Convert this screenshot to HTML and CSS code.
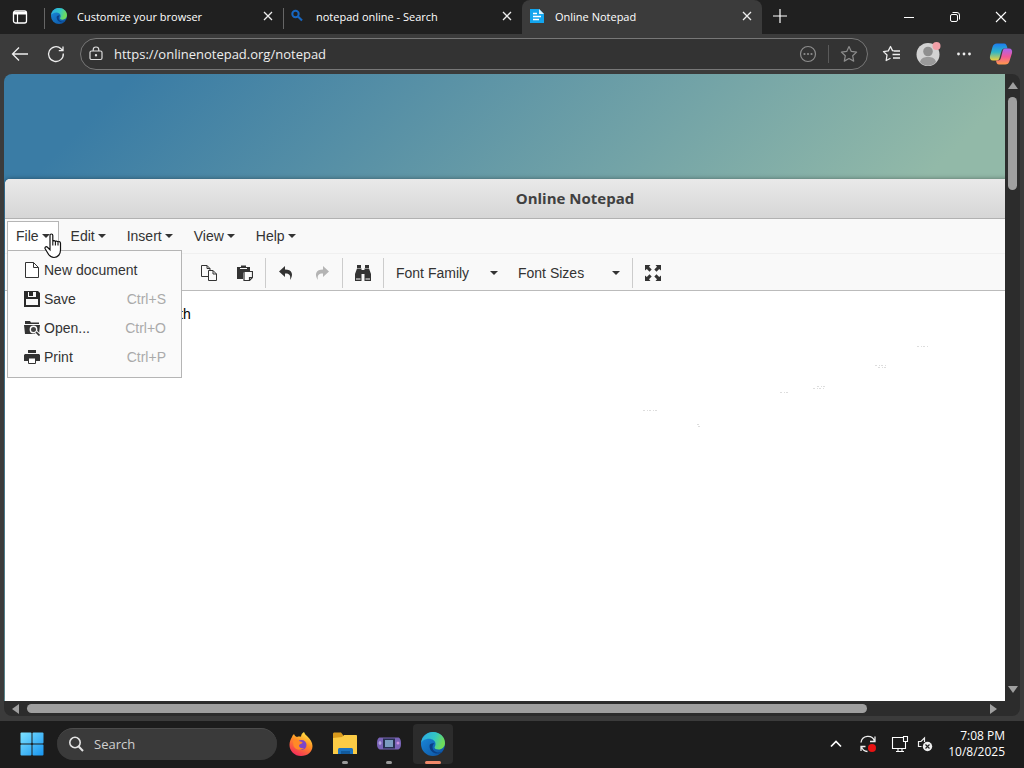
FILE: index.html
```html
<!DOCTYPE html>
<html lang="en">
<head>
    <meta charset="UTF-8">
    <meta name="viewport" content="width=device-width, initial-scale=1.0">
    <title>Online Notepad</title>
    <link rel="stylesheet" href="styles.css">
</head>
<body>
    <svg width="0" height="0" class="defs" aria-hidden="true">
        <defs>
            <linearGradient id="edge-a" x1="0" y1="0" x2="1" y2="0.3">
                <stop offset="0" stop-color="#2aa7e8"/>
                <stop offset="0.6" stop-color="#33c6c4"/>
                <stop offset="1" stop-color="#6fdc5a"/>
            </linearGradient>
            <linearGradient id="edge-b" x1="0" y1="0" x2="1" y2="1">
                <stop offset="0" stop-color="#1b8ee0"/>
                <stop offset="1" stop-color="#0c4f9e"/>
            </linearGradient>
            <linearGradient id="win" gradientUnits="userSpaceOnUse" x1="0" y1="0" x2="24" y2="24">
                <stop offset="0" stop-color="#7fe3ff"/>
                <stop offset="1" stop-color="#1593f0"/>
            </linearGradient>
            <linearGradient id="fox" x1="0.8" y1="0" x2="0.3" y2="1">
                <stop offset="0" stop-color="#fff04a"/>
                <stop offset="0.45" stop-color="#ff9124"/>
                <stop offset="1" stop-color="#f4285c"/>
            </linearGradient>
            <linearGradient id="cop-a" x1="0" y1="0" x2="0" y2="1">
                <stop offset="0" stop-color="#1b7df0"/>
                <stop offset="0.5" stop-color="#2fb5c8"/>
                <stop offset="1" stop-color="#f5d13a"/>
            </linearGradient>
            <linearGradient id="cop-b" x1="0" y1="0" x2="0" y2="1">
                <stop offset="0" stop-color="#a865f0"/>
                <stop offset="0.5" stop-color="#f0589a"/>
                <stop offset="1" stop-color="#ff9a4a"/>
            </linearGradient>
            <symbol id="edge" viewBox="0 0 24 24">
                <circle cx="12" cy="12" r="12" fill="url(#edge-b)"/>
                <path d="M0 11C1 4 6 0 12 0c7 0 12 5 12 11 0 4-3 6.500-6.500 6.500-2.500 0-4-1-4-2 0-.8 1-1.500 1-3.500C14.500 9 11.500 6.800 8 6.800 4 6.800 1 9 0 11z" fill="url(#edge-a)"/>
                <path d="M8.500 14c0 5 4.500 8 9 7.500 2-.2 3.500-1 4.500-2-1 .5-2.500 1-4.500 1-3.500 0-6-2.500-6-5.500 0-2 1-3 2-3.500-3-.5-5 .5-5 2.500z" fill="#0a3f86"/>
            </symbol>
            <symbol id="close" viewBox="0 0 16 16">
                <path d="M4 4l8 8M12 4l-8 8" stroke="#eee" stroke-width="1.300" fill="none"/>
            </symbol>
        </defs>
    </svg>

    <header class="tabstrip">
        <button class="tab-menu" aria-label="Tab actions">
            <svg width="16" height="16" viewBox="0 0 16 16"><rect x="1.500" y="2" width="13" height="12" rx="2" fill="none" stroke="#fff" stroke-width="1.300"/><path d="M1.500 3h13v2.500h-13z" fill="#fff"/><path d="M5.500 5v9" stroke="#fff" stroke-width="1.200"/></svg>
        </button>
        <div class="tab">
            <svg class="favicon" width="16" height="16"><use href="#edge"/></svg>
            <span class="tab-title">Customize your browser</span>
            <button class="tab-close" aria-label="Close tab"><svg width="16" height="16"><use href="#close"/></svg></button>
        </div>
        <div class="tab">
            <svg class="favicon" width="16" height="16" viewBox="0 0 16 16"><circle cx="5.500" cy="6" r="3.200" fill="none" stroke="#1767c2" stroke-width="2"/><path d="M8 8.500l4 4" stroke="#1767c2" stroke-width="2.200"/></svg>
            <span class="tab-title">notepad online - Search</span>
            <button class="tab-close" aria-label="Close tab"><svg width="16" height="16"><use href="#close"/></svg></button>
        </div>
        <div class="tab active">
            <svg class="favicon" width="16" height="16" viewBox="0 0 16 16"><path d="M0 1h9l5 5v9H0z" fill="#12a5ee"/><path d="M9 1l5 5H9z" fill="#d8f1fd"/><path d="M3 5.500h4M3 8.500h8M3 11.500h6" stroke="#fff" stroke-width="1.400"/></svg>
            <span class="tab-title">Online Notepad</span>
            <button class="tab-close" aria-label="Close tab"><svg width="16" height="16"><use href="#close"/></svg></button>
        </div>
        <button class="new-tab" aria-label="New tab">
            <svg width="16" height="16" viewBox="0 0 16 16"><path d="M8 1v14M1 8h14" stroke="#fff" stroke-width="1.200"/></svg>
        </button>
        <div class="window-controls">
            <button aria-label="Minimize"><svg width="12" height="12" viewBox="0 0 12 12"><path d="M1 6.500h10" stroke="#fff"/></svg></button>
            <button aria-label="Restore"><svg width="12" height="12" viewBox="0 0 12 12" fill="none" stroke="#fff"><rect x="1.500" y="3.500" width="7" height="7" rx="1.500"/><path d="M3.500 1.500h4.500a2.500 2.500 0 0 1 2.500 2.500v4.500"/></svg></button>
            <button aria-label="Close"><svg width="12" height="12" viewBox="0 0 12 12"><path d="M1 1l10 10M11 1L1 11" stroke="#fff" stroke-width="1.100"/></svg></button>
        </div>
    </header>

    <nav class="navbar">
        <button class="nav-btn" aria-label="Back"><svg width="20" height="20" viewBox="0 0 20 20" fill="none" stroke="#eee" stroke-width="1.300"><path d="M18 10H2.500M9 3.500L2.500 10 9 16.500"/></svg></button>
        <button class="nav-btn" aria-label="Refresh"><svg width="20" height="20" viewBox="0 0 20 20" fill="none" stroke="#eee" stroke-width="1.300"><path d="M17.300 9.500A7.400 7.400 0 1 1 15 4.700L17 6.500M17 2.500v4.200h-4.200"/></svg></button>
        <div class="address">
            <svg width="16" height="16" viewBox="0 0 16 16" fill="none" stroke="#ddd" stroke-width="1.200"><rect x="2" y="5" width="12" height="8.500" rx="1.500"/><path d="M5.200 5V3.800a2.800 2.800 0 0 1 5.600 0V5"/><circle cx="8" cy="9.300" r=".6" fill="#ddd"/></svg>
            <input type="text" value="https://onlinenotepad.org/notepad" aria-label="Address">
            <button class="address-btn" aria-label="More"><svg width="18" height="18" viewBox="0 0 18 18"><circle cx="9" cy="9" r="7.500" fill="none" stroke="#8d8d8d" stroke-width="1.200"/><g fill="#8d8d8d"><circle cx="5.500" cy="9" r="1.100"/><circle cx="9" cy="9" r="1.100"/><circle cx="12.500" cy="9" r="1.100"/></g></svg></button>
            <span class="address-sep"></span>
            <button class="address-btn" aria-label="Favorite"><svg width="18" height="18" viewBox="0 0 18 18" fill="none" stroke="#8d8d8d" stroke-width="1.200" stroke-linejoin="round"><path d="M9 1.500l2.300 4.900 5.300.7-3.900 3.700 1 5.300L9 13.500l-4.700 2.600 1-5.300L1.400 7.100l5.300-.7z"/></svg></button>
        </div>
        <button class="nav-btn" aria-label="Favorites"><svg width="20" height="20" viewBox="0 0 20 20" fill="none" stroke="#eee" stroke-width="1.300" stroke-linejoin="round"><path d="M12 6.800L10.500 6.600 8.500 2.500 6.300 6.900l-4.800.7L5 11l-.8 5.500 4.300-2.300"/><path d="M12 7h6M10.500 10.500h7.500M11 14h7"/></svg></button>
        <button class="nav-btn" aria-label="Profile"><svg width="26" height="26" viewBox="0 0 26 26"><circle cx="13" cy="13.500" r="11.500" fill="#d2d2d2"/><circle cx="13" cy="10.500" r="4.800" fill="#8f8f8f"/><path d="M5 21c1-4 4-5 8-5s7 1 8 5c-4.500 5-11.500 5-16 0z" fill="#9a9a9a"/><circle cx="21.500" cy="5" r="4" fill="#f2a0a8"/></svg></button>
        <button class="nav-btn" aria-label="Settings and more"><svg width="20" height="20" viewBox="0 0 20 20" fill="#eee"><circle cx="4.500" cy="10" r="1.400"/><circle cx="10" cy="10" r="1.400"/><circle cx="15.500" cy="10" r="1.400"/></svg></button>
        <button class="nav-btn copilot" aria-label="Copilot"><svg width="24" height="24" viewBox="0 0 24 24"><path d="M8 1.500h7c2 0 2.500 1.500 3 3l.5 2h-3c-2 0-2.700 1.300-3.300 3.500l-1.700 6c-.6 2-1.500 2.500-3 2.500H4c-2.500 0-3.500-2-3-4.500L3.500 5C4.200 2.700 5.500 1.500 8 1.500z" fill="url(#cop-a)"/><path d="M16 6.500h4c2.500 0 3.500 2 3 4.500L20.500 19c-.7 2.500-2 3.500-4.500 3.500H10c-2 0-2.500-1.500-3-4h2c2 0 2.500-1 3-3l1.500-6c.5-2 1-3 2.500-3z" fill="url(#cop-b)"/></svg></button>
    </nav>

    <div class="frame">
        <main class="viewport">
            <section class="notepad">
                <h1>Online Notepad</h1>
                <div class="menubar">
                    <div class="menu-holder">
                        <button class="menu-btn open">File<i class="caret"></i></button>
                        <div class="dropdown">
                            <button class="menu-item">
                                <svg width="16" height="16" viewBox="0 0 16 16" fill="#fff" stroke="#333"><path d="M1.500.5h8l5 5v10h-13zM9.500.5v5h5"/></svg>
                                <span>New document</span>
                            </button>
                            <button class="menu-item">
                                <svg width="16" height="16" viewBox="0 0 16 16"><path d="M0 0h14l2 2v14H0z" fill="#2b2b2b"/><path d="M2 8h12v6H2z" fill="#fafafa"/><path d="M4 1h8v5H4z" fill="#fafafa"/><path d="M5 0h4v5H5z" fill="#2b2b2b"/></svg>
                                <span>Save</span><kbd>Ctrl+S</kbd>
                            </button>
                            <button class="menu-item">
                                <svg width="16" height="16" viewBox="0 0 16 16"><path d="M1 1h5l1 1.500h8V4H1zM0 5h16l-1 9H1z" fill="#333"/><circle cx="9.500" cy="9.500" r="3.200" fill="#444" stroke="#fafafa" stroke-width="1.400"/><path d="M11.500 11.500L16 16" stroke="#fafafa" stroke-width="3.400"/><path d="M12 12l3.500 3.500" stroke="#333" stroke-width="1.700"/></svg>
                                <span>Open...</span><kbd>Ctrl+O</kbd>
                            </button>
                            <button class="menu-item">
                                <svg width="16" height="16" viewBox="0 0 16 16"><path d="M4 1h8v3H4z" fill="#333"/><path d="M1 5h14l1 1v6h-4V9H4v3H0V6z" fill="#333"/><path d="M4.500 9h7v5.500h-7z" fill="#fff" stroke="#333"/></svg>
                                <span>Print</span><kbd>Ctrl+P</kbd>
                            </button>
                        </div>
                        <svg class="pointer" width="18" height="26" viewBox="0 0 18 26" aria-hidden="true"><path d="M6 2.500c0-2 2.800-2 2.800 0v6.300c0-1.500 2.600-1.500 2.600.3 0-1.500 2.600-1.400 2.600.5 0-1.400 2.500-1.300 2.500.6V17c0 4-2.500 7.500-6.500 7.500-3 0-4.500-1.500-6-4L1.300 16c-1-1.800.8-3 2.200-1.700L6 16.800z" fill="#fff" stroke="#111" stroke-width="1.200"/><path d="M8.800 8.500v4M11.400 9v3.500M14 9.500v3" stroke="#111" stroke-width="1.100"/></svg>
                    </div>
                    <button class="menu-btn">Edit<i class="caret"></i></button>
                    <button class="menu-btn">Insert<i class="caret"></i></button>
                    <button class="menu-btn">View<i class="caret"></i></button>
                    <button class="menu-btn">Help<i class="caret"></i></button>
                </div>
                <div class="toolbar">
                    <div class="group">
                        <button class="tool" aria-label="Copy"><svg width="16" height="16" viewBox="0 0 16 16" fill="#fafafa" stroke="#333"><path d="M.5.500h5.500l3 3v8h-8.500zM6 .5v3h3"/><path d="M7.500 5.500H12l3.500 3.500v6.500h-8zM12 5.500V9h3.500"/></svg></button>
                        <button class="tool" aria-label="Paste"><svg width="16" height="16" viewBox="0 0 16 16"><path d="M0 2h4V.500h5V2h4v4H8L6 8v6H0z" fill="#333"/><path d="M3 3.500h7" stroke="#fafafa"/><path d="M7 6.500h8.500v6l-3 3H7zM15.500 12.500h-3v3" fill="#fafafa" stroke="#333" stroke-width="1.200"/></svg></button>
                    </div>
                    <div class="group">
                        <button class="tool" aria-label="Undo"><svg width="16" height="16" viewBox="0 0 16 16"><path d="M7 1L1 6.500 7 12V8.500c4.500-.3 6 2 5 6.500C16 9.500 14 4.500 7 4.500z" fill="#333"/></svg></button>
                        <button class="tool" aria-label="Redo" disabled><svg width="16" height="16" viewBox="0 0 16 16"><path d="M9 1l6 5.500L9 12V8.500c-4.500-.3-6 2-5 6.500C0 9.500 2 4.500 9 4.500z" fill="#b4b4b4"/></svg></button>
                    </div>
                    <div class="group">
                        <button class="tool" aria-label="Find and replace"><svg width="16" height="16" viewBox="0 0 16 16" fill="#333"><path d="M2 0h4v3H2zM10 0h4v3h-4zM2 3.500h4.500V5h3V3.500H14L16 9v7H9.500V9h-3v7H0V9z"/><path d="M1 14h4.500M10.500 14H15" stroke="#fafafa"/></svg></button>
                    </div>
                    <div class="group">
                        <label class="picker"><select aria-label="Font Family"><option>Font Family</option></select></label>
                        <label class="picker"><select aria-label="Font Sizes"><option>Font Sizes</option></select></label>
                    </div>
                    <div class="group">
                        <button class="tool" aria-label="Fullscreen"><svg width="16" height="16" viewBox="0 0 16 16" fill="#333"><path d="M0 0h5.500L4 1.800l2.700 2.700-2.200 2.200L1.800 4 0 5.500zM16 0v5.500L14.200 4l-2.700 2.700-2.200-2.200L12 1.800 10.500 0zM0 16v-5.500L1.800 12l2.700-2.700 2.200 2.200L4 14.200 5.500 16zM16 16h-5.500l1.500-1.800-2.700-2.700 2.200-2.200 2.700 2.700 1.800-1.500z"/></svg></button>
                    </div>
                </div>
                <div class="editor">
                    <p>th</p>
                    <svg class="specks" width="292" height="82" viewBox="0 0 292 82" fill="none" stroke="#ddd" stroke-dasharray="2 2 1 1" aria-hidden="true"><path d="M2 65.500h14M56 79.500h3M57 81.500h4M139 47.500h10M172 43.500h12M176 41.500h8M234 20.500h12M237 22.500h8M276 1.500h12"/></svg>
                </div>
            </section>
        </main>
        <div class="scroll-y">
            <i class="arrow-up"></i>
            <div class="track"><div class="thumb"></div></div>
            <i class="arrow-down"></i>
        </div>
        <div class="scroll-x">
            <i class="arrow-left"></i>
            <div class="track"><div class="thumb"></div></div>
            <i class="arrow-right"></i>
        </div>
    </div>

    <footer class="taskbar">
        <button class="task" aria-label="Start"><svg width="24" height="24" viewBox="0 0 24 24" fill="url(#win)"><rect x="0.500" y="0.500" width="11" height="11" rx="1"/><rect x="12.500" y="0.500" width="11" height="11" rx="1"/><rect x="0.500" y="12.500" width="11" height="11" rx="1"/><rect x="12.500" y="12.500" width="11" height="11" rx="1"/></svg></button>
        <label class="search">
            <svg width="16" height="16" viewBox="0 0 16 16" fill="none" stroke="#e4e4e4"><circle cx="7" cy="6.500" r="5.200" stroke-width="1.600"/><path d="M10.700 10.500L15 15" stroke-width="2"/></svg>
            <input type="text" placeholder="Search" aria-label="Search">
        </label>
        <button class="task" aria-label="Firefox"><svg width="24" height="24" viewBox="0 0 24 24"><path d="M3 5c.5-1.500 1-2 2-3 .5 1.500 1.500 2.500 3 3 1-.5 3-.5 4-.3C12 3 13 1 15 0c1 2.500 2 3 3.500 4.500C21 7 23.500 10 23.500 14c0 6-5 10-11.500 10S.5 19 .5 13C.5 10 1.500 7 3 5z" fill="url(#fox)"/><circle cx="12.500" cy="13" r="5" fill="#7b45c9"/><path d="M4 9c2-1.500 5-1.500 7 .5 1.500 0 2.500.5 2.500 1.500-1 1-3 1-3.500 2.500 0 2 2 3 5 2.500-3 3-9 2-10.500-2z" fill="#ff8a27"/></svg></button>
        <button class="task running" aria-label="File Explorer"><svg width="24" height="24" viewBox="0 0 24 24"><path d="M0 2c0-1 .5-1.500 1.500-1.500H8L10 3v5H0z" fill="#d99a1c"/><path d="M0 6l9-1 2-2h12c.7 0 1 .4 1 1v18H0z" fill="#fbcb45"/><path d="M5 22v-4c0-1.500.5-2 2-2h11c1.500 0 2 .5 2 2v4z" fill="#1c73c0"/><path d="M8 19h9v3H8z" fill="#125a9c"/></svg></button>
        <button class="task running" aria-label="Game"><svg width="24" height="16" viewBox="0 0 24 16"><path d="M3 1.500h18c2 0 3 2.500 3 6s-1 6-3.500 6h-17C1 13.500 0 11 0 7.500s1-6 3-6z" fill="#7a64b8"/><rect x="6" y="2.500" width="12" height="10" fill="#26304e"/><rect x="8" y="4" width="8" height="7" fill="#7b9cc0"/><path d="M3 5v4M1.500 7h3" stroke="#c9bcf0"/><circle cx="21" cy="7" r="1.500" fill="#c98fe0"/></svg></button>
        <button class="task running current" aria-label="Microsoft Edge"><svg width="24" height="24"><use href="#edge"/></svg></button>
        <div class="tray">
            <button aria-label="Show hidden icons"><svg width="12" height="12" viewBox="0 0 12 12"><path d="M1 8.500l5-5 5 5" fill="none" stroke="#fff" stroke-width="1.700"/></svg></button>
            <button aria-label="Updates"><svg width="18" height="18" viewBox="0 0 18 18" fill="none" stroke="#eee" stroke-width="1.300"><path d="M2 7.500A7 7 0 0 1 15.500 6M16 1.500V6.500h-5M2 16v-4.500h4.500M2.500 12a7 7 0 0 0 6 4.500"/><circle cx="13" cy="13" r="4" fill="#e81313" stroke="none"/></svg></button>
            <button aria-label="Network"><svg width="18" height="18" viewBox="0 0 18 18" fill="none" stroke="#fff" stroke-width="1.100"><path d="M12 2.500H1.500v11h13V9M5 16.500h8M7 13.500v3M11 13.500v3"/><path d="M12.500 1.500h4v5h-4zM14.500 6.500V9"/></svg></button>
            <button class="volume" aria-label="Volume"><svg width="16" height="16" viewBox="0 0 16 16"><path d="M4.500 10.500H1.500v-5H4L7.500 2v4" fill="none" stroke="#eee" stroke-width="1.200"/><circle cx="10.500" cy="10.500" r="4.700" fill="#eee"/><path d="M8.500 8.500l4 4M12.500 8.500l-4 4" stroke="#222" stroke-width="1.200"/></svg></button>
        </div>
        <div class="clock">
            <span>7:08 PM</span>
            <span>10/8/2025</span>
        </div>
    </footer>
</body>
</html>
```
FILE: styles.css
```css
* {
    box-sizing: border-box;
}

body {
    margin: 0;
    height: 100vh;
    display: flex;
    flex-direction: column;
    overflow: hidden;
    background-color: #3b3b3b;
    color: #fff;
    font-family: "Segoe UI", "Open Sans", sans-serif;
    font-size: 11px;
}

button {
    display: flex;
    align-items: center;
    justify-content: center;
    padding: 0;
    border: none;
    background: none;
    color: inherit;
    font: inherit;
}

input {
    min-width: 0;
    flex: 1;
    padding: 0;
    border: none;
    outline: none;
    background: none;
    color: #eee;
    font: inherit;
}

svg {
    display: block;
    flex: none;
}

.defs {
    position: absolute;
}

/* tabs */
.tabstrip {
    display: flex;
    height: 34px;
    background-color: #202020;
}

.tab-menu {
    width: 44px;
    padding-right: 4px;
}

.tab {
    display: flex;
    align-items: center;
    flex: 0 1 239px;
    padding: 0 7px 2px 6px;
    border-left: 1px solid #666;
    border-image: linear-gradient(transparent 24%, #666 24%, #666 84%, transparent 84%) 1;
}

.tab.active {
    flex-basis: 240px;
    background-color: #3b3b3b;
    border: none;
    border-radius: 8px 8px 0 0;
    padding-left: 8px;
}

.tab-title {
    flex: 1;
    padding-left: 10px;
    white-space: nowrap;
}

.active .tab-title {
    padding-left: 9px;
}

.new-tab {
    width: 36px;
    padding-bottom: 2px;
}

.window-controls {
    display: flex;
    margin-left: auto;
}

.window-controls button {
    width: 46px;
}

/* address row */
.navbar {
    display: flex;
    align-items: center;
    height: 40px;
    padding: 0 4px 0 2px;
}

.nav-btn {
    width: 36px;
    height: 36px;
}

.nav-btn.copilot {
    width: 38px;
}

.address {
    display: flex;
    align-items: center;
    flex: 1;
    height: 32px;
    margin: 0 6px;
    padding: 0 7px;
    border: 1px solid #777;
    border-radius: 16px;
    background-color: #333;
    font-size: 13px;
}

.address input {
    padding-left: 10px;
}

.address-btn {
    width: 22px;
}

.address-sep {
    width: 1px;
    height: 18px;
    margin: 0 9px;
    background-color: #5a5a5a;
}

/* page area with its scrollbars */
.frame {
    flex: 1;
    min-height: 0;
    display: grid;
    grid-template-columns: 1fr 15px;
    grid-template-rows: 1fr 15px;
    margin: 0 4px;
    padding-bottom: 5px;
}

.viewport {
    display: flex;
    flex-direction: column;
    min-width: 0;
    overflow: hidden;
    padding: 105px 0 0 1px;
    border-radius: 8px 0 0 0;
    background: linear-gradient(135deg, #3a7ca5 0%, #3a7ca5 8%, #92b9a8 63%);
}

.notepad {
    flex: 1;
    display: flex;
    flex-direction: column;
    width: 114%;
    border-radius: 5px 5px 0 0;
    background-color: #fff;
    color: #333;
    font-family: "Liberation Sans", Arial, sans-serif;
    font-size: 14px;
    box-shadow: 0 0 5px rgba(0, 0, 0, 0.4);
}

.notepad h1 {
    margin: 0;
    height: 40px;
    line-height: 39px;
    border-bottom: 1px solid #b1b1b1;
    border-radius: 5px 5px 0 0;
    background: linear-gradient(#e9e9e9, #d6d6d6);
    color: #404040;
    font-family: "Open Sans", sans-serif;
    font-size: 15px;
    text-align: center;
}

.menubar {
    display: flex;
    gap: 3px;
    height: 35px;
    padding: 2px;
    background-color: #f9f9f9;
    border-bottom: 1px solid #f0f0f0;
}

.menu-holder {
    position: relative;
}

.menu-btn {
    height: 30px;
    padding: 0 8px;
    gap: 3px;
    border: 1px solid transparent;
}

.menu-btn.open {
    border-color: #b5b5b5;
    background-color: #fff;
}

.caret {
    border: 4px solid transparent;
    border-top-color: #333;
    border-bottom: none;
}

.dropdown {
    position: absolute;
    top: 29px;
    left: 0;
    z-index: 1;
    width: 175px;
    padding: 4px 0 6px;
    border: 1px solid #b5b5b5;
    background-color: #fafafa;
}

.menu-item {
    width: 100%;
    height: 29px;
    padding: 0 15px 0 16px;
    gap: 4px;
    justify-content: flex-start;
}

.menu-item kbd {
    margin-left: auto;
    color: #aaa;
    font: inherit;
}

.pointer {
    position: absolute;
    top: 12px;
    left: 37px;
    z-index: 2;
}

.toolbar {
    display: flex;
    height: 37px;
    padding: 4px 0 2px 184px;
    background-color: #f9f9f9;
    border-bottom: 1px solid #bbb;
}

.group {
    display: flex;
    padding: 0 2px;
    border-right: 1px solid #ccc;
}

.group:last-child {
    border-right: none;
}

.tool {
    width: 36px;
}

.picker {
    display: flex;
    align-items: center;
    width: 122px;
    padding: 0 10px;
}

.picker select {
    flex: 1;
    min-width: 0;
    appearance: none;
    border: none;
    background: none;
    color: #333;
    font: inherit;
}

.picker::after {
    content: "";
    border: 4px solid transparent;
    border-top-color: #333;
    border-bottom: none;
}

.editor {
    position: relative;
    flex: 1;
}

.editor p {
    margin: 15px 0 0 174px;
    color: #000;
}

.specks {
    position: absolute;
    top: 54px;
    left: 636px;
}

/* scrollbars */
.scroll-y,
.scroll-x {
    display: flex;
    align-items: center;
    background-color: #2c2c2c;
}

.scroll-y {
    flex-direction: column;
    padding: 8px 0;
    border-radius: 0 8px 0 0;
}

.scroll-x {
    grid-column: 1 / 3;
    padding: 0 23px 0 8px;
    border-radius: 0 0 8px 8px;
}

.track {
    flex: 1;
}

.scroll-y .track {
    margin: 8px 0;
}

.scroll-x .track {
    margin: 0 8px;
}

.thumb {
    border-radius: 5px;
    background-color: #9f9f9f;
}

.scroll-y .thumb {
    width: 9px;
    height: 16%;
}

.scroll-x .thumb {
    width: 88%;
    height: 9px;
}

.scroll-y i,
.scroll-x i {
    border: 5px solid transparent;
}

.scroll-y .arrow-up {
    border-top: none;
    border-bottom: 7px solid #9f9f9f;
}

.scroll-y .arrow-down {
    border-bottom: none;
    border-top: 7px solid #9f9f9f;
}

.scroll-x .arrow-left {
    border-left: none;
    border-right: 7px solid #9f9f9f;
}

.scroll-x .arrow-right {
    border-right: none;
    border-left: 7px solid #9f9f9f;
}

/* taskbar */
.taskbar {
    display: flex;
    align-items: center;
    gap: 4px;
    height: 47px;
    padding: 0 19px 2px 12px;
    background-color: #1c1c1c;
}

.task {
    position: relative;
    width: 40px;
    height: 40px;
    border-radius: 4px;
}

.task.current {
    background-color: #2c2c2c;
}

.task.running::after {
    content: "";
    position: absolute;
    bottom: 0;
    width: 6px;
    height: 3px;
    border-radius: 2px;
    background-color: #9a9a9a;
}

.task.current::after {
    width: 16px;
    background-color: #f0896a;
}

.search {
    display: flex;
    align-items: center;
    gap: 10px;
    width: 220px;
    height: 32px;
    margin-left: 1px;
    padding: 0 11px;
    border-radius: 16px;
    background-color: #3a3a3a;
    border-top: 1px solid #4c4c4c;
    font-size: 13px;
}

.search input::placeholder {
    color: #d0d0d0;
    opacity: 1;
}

.tray {
    display: flex;
    align-items: center;
    margin-left: auto;
}

.tray button {
    width: 32px;
}

.tray .volume {
    width: 18px;
}

.clock {
    display: flex;
    flex-direction: column;
    align-items: flex-end;
    margin-left: 10px;
    font-size: 12px;
    line-height: 16px;
}
```
